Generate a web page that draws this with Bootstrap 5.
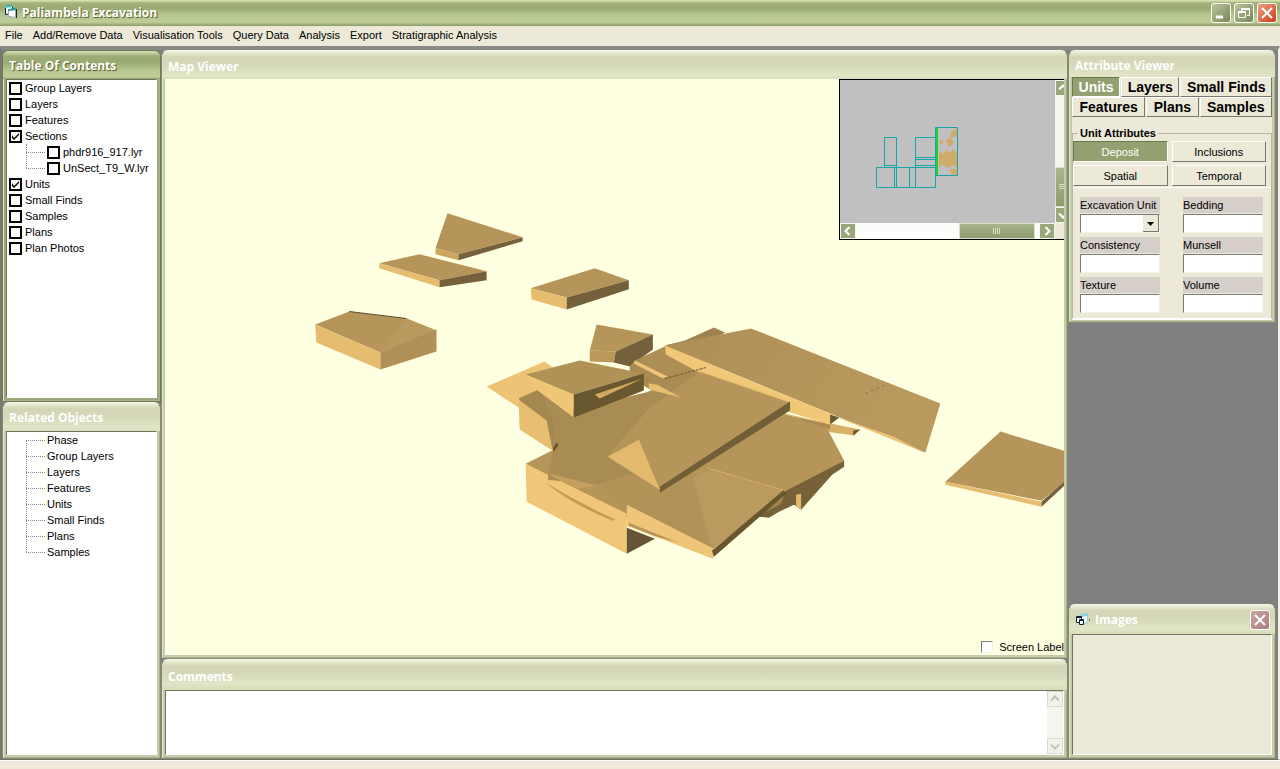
<!DOCTYPE html>
<html lang="en">
<head>
<meta charset="utf-8">
<meta name="viewport" content="width=device-width, initial-scale=1">
<title>Paliambela Excavation</title>
<link href="https://cdn.jsdelivr.net/npm/bootstrap@5.3.0/dist/css/bootstrap.min.css" rel="stylesheet">
<style>
  :root { --face:#ece9d8; --olive:#93a070; --line:#6f735f; }
  body { font-family:"Liberation Sans",sans-serif; font-size:11px; line-height:16px; color:#000; background:var(--face); min-height:100vh; }
  button, input, select, textarea { font:inherit; color:inherit; border-radius:0; padding:0; }
  .ui-title { font-family:"Open Sans",sans-serif; font-weight:700; font-size:12px; line-height:16px; color:#fff; }
  .app-title { height:26px; padding:0 3px 0 4px; background:linear-gradient(#dfe9b8 0,#a3b37c 3px,#98a971 8px,#b6c68f 15px,#c0cf9a 22px,#8b9b66 26px); text-shadow:1px 1px 1px #4b5a2c; }
  .sys { width:20px; height:20px; border:1px solid #fff; border-radius:3px; background:linear-gradient(135deg,#b9c79a,#74875a); }
  .sys svg, .arrow svg { display:block; margin:auto; }
  .sys-close { background:linear-gradient(135deg,#f0a184,#c93d1c); }
  .sys-soft { background:linear-gradient(135deg,#c9a5a2,#a97e80); }
  .sys-row { gap:3px; }
  .app-menu { height:20px; }
  .app-menu a { color:#000; text-decoration:none; }
  .menu-gap { gap:10px; padding:1px 5px; }
  .desk { background:#808080; border-top:4px solid #8b8b85; border-left:2px solid #77796c; border-right:2px solid #f4f2e8; border-bottom:1px solid var(--line); }
  .side-left { width:159px; }
  .side-right { width:210px; padding-right:2px; }
  .pane { background:#c5ccac; border:1px solid #84896f; border-top-color:#f6f7e6; border-radius:7px 7px 0 0; padding:0 3px 3px; box-shadow:inset 1px 0 #e3e8cd, inset -1px -1px #a9b28f; }
  .pane-head { height:28px; margin:0 -3px; padding:7px 5px 0 6px; border-radius:6px 6px 0 0; background:linear-gradient(#f0f2dc 0,#d3d5b6 6px,#d5d8b9 14px,#e1e5c6 24px,#d8ddbb 28px); }
  .pane-active { background:#9aa97b; border-color:#6c7953; }
  .pane-active .pane-head { background:linear-gradient(#dce5bf 0,#9dad77 5px,#9aaa73 11px,#b8c892 20px,#c0cf9b 26px,#8d9c69 28px); text-shadow:1px 1px 1px #4b5a2c; }
  .well { background:#fff; border:1px solid var(--line); border-right-color:#fff; border-bottom-color:#fff; }
  .toc-pane { height:352px; }
  .tree, .tree ul { list-style:none; margin:0; padding:0; }
  .toc { padding:0 2px; }
  .tick { appearance:none; width:13px; height:13px; flex:none; margin:2px 3px 0 0; border:2px solid #000; background:#fff center/9px 9px no-repeat; }
  .tick:checked { background-image:url("data:image/svg+xml,%3Csvg xmlns='http://www.w3.org/2000/svg' viewBox='0 0 9 9'%3E%3Cpath d='M1 3v3l2 2 5-5V1L3 6z'/%3E%3C/svg%3E"); }
  .branches { position:relative; }
  .branches li::before { content:""; width:19px; margin-right:2px; border-top:1px dotted #888; }
  .branches::before { content:""; position:absolute; top:0; bottom:8px; border-left:1px dotted #888; }
  .toc .branches { margin-left:17px; }
  .related { margin-left:19px; }
  .related::before { top:8px; }
  .map { background:#ffffe1; overflow:hidden; }
  .scene { display:block; width:100%; height:100%; min-height:300px; }
  .inset-map { width:225px; height:161px; border:1px solid #000; border-right:0; background:var(--face); overflow:hidden; }
  .inset-view { width:215px; background:#c0c0c0; }
  .bar-v { width:16px; background:#f5f4f0; }
  .bar-h { height:16px; background:#fcfcfa; }
  .arrow { width:16px; height:16px; flex:none; border:1px solid #f6f8ec; background:#9aa77c; }
  .arrow-off { background:#f2f1ea; border-color:#dcdacd; }
  .thumb { background:linear-gradient(#a9b58c,#8d9b6d); border:1px solid #d9e0c5; }
  .thumb-h { width:76px; }
  .grip { width:8px; height:6px; background:repeating-linear-gradient(90deg,#d8e0c0 0 1px,transparent 1px 2px); }
  .grip-v { background:repeating-linear-gradient(#d8e0c0 0 1px,transparent 1px 2px); }
  .screen-label { right:0; bottom:0; gap:6px; }
  .sunk { appearance:none; border:1px solid #7b7b72; border-right-color:#f4f2e6; border-bottom-color:#f4f2e6; background:#fff; }
  .label-tick { width:12px; height:12px; margin:0; }
  .map-pane .pane-head { padding-top:8px; }
  .comments-pane { height:100px; }
  .comments-pane .pane-head { height:30px; padding-top:9px; }
  .notes { resize:none; border:0; outline:0; }
  .attr-pane { padding-bottom:2px; }
  .attr-pane .pane-head { height:26px; }
  .attr { background:var(--face); border-bottom:1px solid #fff; }
  .tab { font-size:14px; font-weight:700; line-height:18px; height:20px; border:1px solid #fff; border-right-color:#77776b; border-bottom-color:#77776b; background:var(--face); white-space:nowrap; }
  .tab.chosen, .key.chosen { background:var(--olive); color:#fff; border-color:#6c7950 #fff #fff #6c7950; }
  .tab-row { gap:1px; overflow:hidden; }
  .group { border:1px solid #b9b8a6; border-bottom-color:#fff; margin:10px 0 0; padding:0; }
  .group legend { float:none; width:auto; margin:0 0 0 5px; padding:0 2px; font-size:11px; line-height:12px; font-weight:700; }
  .keys { gap:3px; margin-top:2px; padding-right:5px; }
  .keys > div { gap:4px; }
  .key { height:21px; border:1px solid #fff; border-right-color:#77776b; border-bottom-color:#77776b; background:var(--face); flex:1 1 0; line-height:18px; }
  .fields { display:grid; grid-template-columns:1fr 1fr; column-gap:23px; padding:9px 8px 1px 7px; border-top:1px solid #fff; margin-top:1px; }
  .fields label { display:block; background:#d6cfc9; }
  .fields .sunk { display:block; width:100%; height:19px; margin:1px 0 4px; }
  .combo { background:#fff right 0 center/16px 17px no-repeat url("data:image/svg+xml,%3Csvg xmlns='http://www.w3.org/2000/svg' viewBox='0 0 16 17'%3E%3Cpath fill='%23ece9d8' d='M0 0h16v17H0z'/%3E%3Cpath fill='none' stroke='%23777' d='M0 16.5h15.500V0'/%3E%3Cpath d='M4 7h7L7.500 11z'/%3E%3C/svg%3E"); }
  .images-pane { height:155px; }
  .images-pane .pane-head { height:29px; padding-top:0; }
  .images-pane .well { background:var(--face); }
  .status { height:9px; flex:none; background:#efe9dc; border-top:1px solid #fff; }
</style>
</head>
<body class="d-flex flex-column">
<header>
  <div class="app-title d-flex align-items-center">
    <svg width="14" height="16" viewBox="0 0 14 16" aria-hidden="true"><path fill="#fff" stroke="#123" d="M1.500 1.500l7-1v8l-7 1z"/><path fill="#4cc" d="M1 1l8-1v2L1 3z"/><path fill="#fff" stroke="#9ab" d="M4.500 5.500l7-1v8l-7-1z"/><path fill="#2a9a9a" d="M4 4l8-1v2L4 6z"/><path stroke="#123" d="M12.500 4v9"/></svg>
    <h1 class="ui-title m-0 flex-grow-1 px-1">Paliambela Excavation</h1>
    <div class="sys-row d-flex">
      <button class="sys" aria-label="Minimize"><svg width="16" height="16"><path stroke="#fff" stroke-width="3" d="M3 12h7"/></svg></button>
      <button class="sys" aria-label="Restore"><svg width="16" height="16" fill="none" stroke="#fff"><path d="M5.500 6V3.500h8v7H11M5 4.500h9"/><path d="M2.500 6.500h7v6h-7zM2 7.500h8"/></svg></button>
      <button class="sys sys-close" aria-label="Close"><svg width="16" height="16"><path stroke="#fff" stroke-width="2" d="M3 3l10 10M13 3L3 13"/></svg></button>
    </div>
  </div>
  <nav class="app-menu">
    <div class="menu-gap d-flex">
      <a href="#">File</a><a href="#">Add/Remove Data</a><a href="#">Visualisation Tools</a><a href="#">Query Data</a><a href="#">Analysis</a><a href="#">Export</a><a href="#">Stratigraphic Analysis</a>
    </div>
  </nav>
</header>

<main class="desk d-flex flex-grow-1">
  <div class="side-left d-flex flex-column flex-shrink-0">
    <section class="pane pane-active toc-pane d-flex flex-column">
      <h2 class="pane-head ui-title mb-0">Table Of Contents</h2>
      <div class="well flex-grow-1">
        <ul class="tree toc">
          <li><label class="d-flex"><input class="tick" type="checkbox">Group Layers</label></li>
          <li><label class="d-flex"><input class="tick" type="checkbox">Layers</label></li>
          <li><label class="d-flex"><input class="tick" type="checkbox">Features</label></li>
          <li><label class="d-flex"><input class="tick" type="checkbox" checked>Sections</label>
            <ul class="branches">
              <li class="d-flex align-items-center"><label class="d-flex"><input class="tick" type="checkbox">phdr916_917.lyr</label></li>
              <li class="d-flex align-items-center"><label class="d-flex"><input class="tick" type="checkbox">UnSect_T9_W.lyr</label></li>
            </ul></li>
          <li><label class="d-flex"><input class="tick" type="checkbox" checked>Units</label></li>
          <li><label class="d-flex"><input class="tick" type="checkbox">Small Finds</label></li>
          <li><label class="d-flex"><input class="tick" type="checkbox">Samples</label></li>
          <li><label class="d-flex"><input class="tick" type="checkbox">Plans</label></li>
          <li><label class="d-flex"><input class="tick" type="checkbox">Plan Photos</label></li>
        </ul>
      </div>
    </section>
    <section class="pane d-flex flex-column flex-grow-1">
      <h2 class="pane-head ui-title mb-0">Related Objects</h2>
      <div class="well flex-grow-1">
        <ul class="tree branches related">
          <li class="d-flex align-items-center">Phase</li><li class="d-flex align-items-center">Group Layers</li><li class="d-flex align-items-center">Layers</li><li class="d-flex align-items-center">Features</li><li class="d-flex align-items-center">Units</li><li class="d-flex align-items-center">Small Finds</li><li class="d-flex align-items-center">Plans</li><li class="d-flex align-items-center">Samples</li>
        </ul>
      </div>
    </section>
  </div>

  <div class="d-flex flex-column flex-grow-1">
    <section class="pane map-pane d-flex flex-column flex-grow-1">
      <h2 class="pane-head ui-title mb-0">Map Viewer</h2>
      <div class="map position-relative flex-grow-1">
        <svg class="scene" viewBox="166 80 899 575" preserveAspectRatio="xMinYMin slice" role="img" aria-label="Excavated units in three dimensions">
          <defs><linearGradient id="top" x2="1" y2=".3"><stop stop-color="#ae8f56"/><stop offset="1" stop-color="#b9995d"/></linearGradient></defs>
          <!-- outlying units -->
          <g fill="#b59559">
            <path d="M448 214l75 24-64 17-23-6z"/><path d="M380 264l40-9 67 17-47 9z"/><path d="M531 289l64-20 34 12-62 17z"/><path d="M316 325l34-13 57 7 30 12-56 22z"/><path d="M597 325l56 10-37 17-26-1z"/><path d="M1000 432l66 20v29l-25 20-96-19z"/>
          </g>
          <path d="M381 353l26-34 30 12z" fill="#b99a5e"/>
          <g fill="#e6bd70">
            <path d="M380 264l60 17v7l-60-19z"/><path d="M531 289l36 9v12l-35-10z"/><path d="M316 325l65 28v17l-64-27z"/><path d="M945 482l96 20v5l-96-22z"/>
          </g>
          <path d="M436 249l23 6v6l-23-6z" fill="#cba661"/><path d="M590 351l26 1-2 11-24-1z" fill="#ba985a"/>
          <path d="M381 353l56-23v22l-56 18z" fill="#b09056"/>
          <g fill="#74603a">
            <path d="M459 255l64-17v4l-64 19z"/><path d="M440 281l47-9v9l-47 7z"/><path d="M567 298l62-17v9l-62 20z"/><path d="M616 352l37-17v15l-23 17-16-4z"/><path d="M1041 502l25-22v4l-25 23z"/>
          </g>
          <path d="M350 312l57 7" stroke="#5d4e30"/>
          <!-- rear slabs -->
          <path d="M665 346l20-5 29-13 11 5-20 12z" fill="#9e8350"/>
          <path d="M635 361l32-15 70 31-57 8z" fill="#ad8e55"/>
          <path d="M630 367l5-6 35 17 22-4 10 14-38 10-34-20z" fill="#a98a53"/><path d="M635 361l33 16-5 2-29-15z" fill="#efc677"/>
          <path d="M775 412l55 12 30 6-6 6-36-5-36-6z" fill="#d8b069"/><path d="M780 415l50 10v5z" fill="#a88a52"/><path d="M860 430l-7 6v-5z" fill="#69562f"/>
          <path d="M665 346l25-5 61-12 189 75-15 49-95-39z" fill="url(#top)"/>
          <path d="M665 346l167 69-2 10-40-12-80-34-44-24z" fill="#f1c778"/><path d="M830 415l95 38-32-16z" fill="#edc475"/>
          <path d="M830 415l9 3-9 7z" fill="#6c5933"/><path d="M865 394l23-10" stroke="#8f764a" stroke-dasharray="3 3"/>
          <!-- left slabs -->
          <path d="M487 387l58-25 40 30-66 16z" fill="#edc475"/>
          <path d="M519 399l20-9 36 24-20 38z" fill="#a58850"/><path d="M519 400l28 21 6 30-33-21z" fill="#e8bf72"/>
          <path d="M526 464l30-15 106 43-35 27z" fill="#b59559"/>
          <!-- lower right slab -->
          <path d="M785 485l59-24v6l-12 8-31 35-7-5-15 7-10 6-10-1-46 40z" fill="#766139"/>
          <path d="M796 495l5-1v16l-5-3z" fill="#e1b96c"/><path d="M775 502l9-6-3 8-17 9z" fill="#a1834c"/>
          <path d="M640 490l145-75 42 14 17 32-58 30-75 60z" fill="#b59559"/>
          <path d="M590 470l70-20 45 35-75 32z" fill="#b39358"/>
          <path d="M526 464l101 50v40l-100-52z" fill="#f0c778"/>
          <path d="M546 483q35 21 70 37l-3 1q-42-17-67-38z" fill="#c49b58"/>
          <path d="M627 528l28 11-28 15z" fill="#655534"/>
          <path d="M627 505l33-14 50-23 74 23-72 59z" fill="#b19258"/><path d="M693 478l17-9 74 22-72 58z" fill="#ba9a5e"/>
          <path d="M627 505l89 45-3 9-86-33z" fill="#efc677"/><path d="M629 523l50 20-25-7-25-10z" fill="#b8935a"/><path d="M784 490l2 4-72 63-2-6z" fill="#69562f"/>
          <path d="M707 468l78 23" stroke="#ddb66d" stroke-dasharray="3 1"/>
          <!-- central slabs -->
          <path d="M553 452l2-26-15-36 34 20 72-17 54-21-62 100-40 13-50-5z" fill="#a98c54"/>
          <path d="M608 456l42-48 50-36 90 31-130 86z" fill="#b5955a"/><path d="M660 489l-52-33 73-48z" fill="#b5955a"/>
          <path d="M608 457l31-17 21 50z" fill="#e3ba6d"/><path d="M790 402v9l-130 82v-6z" fill="#725e37"/>
          <path d="M649 384l8 1 24 13-32-8z" fill="#e8bf71"/><path d="M665 379l41-11" stroke="#6a5833" stroke-dasharray="3 1"/><path d="M699 372l89 30" stroke="#ddb66d" stroke-dasharray="3 1"/>
          <path d="M551 474l46 12-20 3-26-13z" fill="#c49f5d"/><path d="M553 449l4-6 2 2-5 7z" fill="#67552f"/>
          <!-- upper left block -->
          <path d="M526 375l54-14 64 13-70 21z" fill="#b09156"/><path d="M526 375l48 20v23l-36-27z" fill="#efc677"/><path d="M574 395l70-21v17l-70 27z" fill="#69572f"/><path d="M595 395l48-16-43 20z" fill="#d2aa61"/>
        </svg>

        <div class="inset-map position-absolute top-0 end-0 d-flex">
          <div class="inset-view d-flex flex-column flex-shrink-0">
            <svg class="flex-grow-1" width="215" height="143" viewBox="840 80 215 143" role="img" aria-label="Trench plan">
              <path fill="#d0aa68" d="M939 151l5 3 2-4 4 3 3-4 4 4v14l-4-2-5 3-4-3-5 2zM951 132l6-4v8l-7 2zM945 140l6-2 3 5-5 4zM950 169h7v6h-5zM940 140h3v4h-3z"/>
              <path fill="none" stroke="#18a5a5" d="M884.500 137.500h12v30h-12zM876.500 167.500h59v20h-59zM894.500 167v20M896.500 167v20M909.500 167v20M915.500 137v50M915.500 137.500h21M915.500 157.500h21M915.500 159.500h21M915.500 165.500h21M935.500 127.500h22v48h-22zM884 165.500h12"/>
              <path stroke="#1fd02a" stroke-width="2" d="M937 128v47"/>
            </svg>
            <div class="bar-h d-flex">
              <button class="arrow" aria-label="Scroll left"><svg width="14" height="14"><path d="M8.500 3l-4 4 4 4" fill="none" stroke="#fff" stroke-width="2"/></svg></button>
              <div class="flex-grow-1 d-flex justify-content-end"><div class="thumb thumb-h h-100 d-flex align-items-center justify-content-center me-1"><span class="grip"></span></div></div>
              <button class="arrow" aria-label="Scroll right"><svg width="14" height="14"><path d="M5.500 3l4 4-4 4" fill="none" stroke="#fff" stroke-width="2"/></svg></button>
            </div>
          </div>
          <div class="d-flex flex-column flex-shrink-0">
            <div class="bar-v d-flex flex-column flex-grow-1">
              <button class="arrow" aria-label="Scroll up"><svg width="14" height="14"><path d="M3 8.500l4-4 4 4" fill="none" stroke="#fff" stroke-width="2"/></svg></button>
              <div class="flex-grow-1 d-flex align-items-end"><div class="thumb w-100 d-flex align-items-center justify-content-center py-3"><span class="grip grip-v"></span></div></div>
              <button class="arrow" aria-label="Scroll down"><svg width="14" height="14"><path d="M3 5.500l4 4 4-4" fill="none" stroke="#fff" stroke-width="2"/></svg></button>
            </div>
            <div class="arrow invisible"></div>
          </div>
        </div>
        <label class="screen-label position-absolute d-flex align-items-center"><input class="sunk label-tick" type="checkbox">Screen Label</label>
      </div>
    </section>
    <section class="pane comments-pane d-flex flex-column">
      <h2 class="pane-head ui-title mb-0"><label for="notes">Comments</label></h2>
      <div class="well flex-grow-1 d-flex">
        <textarea id="notes" class="notes flex-grow-1"></textarea>
        <div class="bar-v d-flex flex-column justify-content-between">
          <button class="arrow arrow-off" aria-label="Scroll up"><svg width="14" height="14"><path d="M3 8.500l4-4 4 4" fill="none" stroke="#c3c2b6" stroke-width="2"/></svg></button>
          <button class="arrow arrow-off" aria-label="Scroll down"><svg width="14" height="14"><path d="M3 5.500l4 4 4-4" fill="none" stroke="#c3c2b6" stroke-width="2"/></svg></button>
        </div>
      </div>
    </section>
  </div>

  <aside class="side-right d-flex flex-column justify-content-between flex-shrink-0">
    <section class="pane attr-pane">
      <h2 class="pane-head ui-title mb-0">Attribute Viewer</h2>
      <div class="attr">
        <div class="tab-row d-flex"><button class="tab chosen flex-grow-1">Units</button><button class="tab flex-grow-1">Layers</button><button class="tab flex-grow-1">Small Finds</button></div>
        <div class="tab-row d-flex"><button class="tab flex-grow-1">Features</button><button class="tab flex-grow-1">Plans</button><button class="tab flex-grow-1">Samples</button></div>
        <fieldset class="group">
          <legend>Unit Attributes</legend>
          <div class="keys d-flex flex-column">
            <div class="d-flex"><button class="key chosen">Deposit</button><button class="key">Inclusions</button></div>
            <div class="d-flex"><button class="key">Spatial</button><button class="key">Temporal</button></div>
          </div>
          <div class="fields">
            <div><label for="unit">Excavation Unit</label><select id="unit" class="sunk combo"><option></option></select></div>
            <div><label for="bedding">Bedding</label><input id="bedding" class="sunk"></div>
            <div><label for="consistency">Consistency</label><input id="consistency" class="sunk"></div>
            <div><label for="munsell">Munsell</label><input id="munsell" class="sunk"></div>
            <div><label for="texture">Texture</label><input id="texture" class="sunk"></div>
            <div><label for="volume">Volume</label><input id="volume" class="sunk"></div>
          </div>
        </fieldset>
      </div>
    </section>
    <section class="pane images-pane d-flex flex-column">
      <div class="pane-head d-flex align-items-center">
        <svg width="16" height="16" viewBox="0 0 16 16" aria-hidden="true"><path fill="#8ad4df" d="M5 2l8-1v9l-5 3z"/><path fill="#fff" d="M7 5l5-1v6l-5 1z"/><path fill="#fff" stroke="#123" d="M1.500 4.500h5v6h-5z"/><path fill="#fff" stroke="#123" d="M4.500 7.500h4v5h-4z"/><path stroke="#123" d="M1 5.500h5M5 8.500h3"/><path fill="#667" d="M14 7h1v2h-1z"/></svg>
        <h2 class="ui-title m-0 ms-1 flex-grow-1">Images</h2>
        <button class="sys sys-soft flex-shrink-0" aria-label="Close"><svg width="16" height="16"><path stroke="#fff" stroke-width="2" d="M3 3l10 10M13 3L3 13"/></svg></button>
      </div>
      <div class="well flex-grow-1"></div>
    </section>
  </aside>
</main>
<footer class="status"></footer>
<script src="https://cdn.jsdelivr.net/npm/bootstrap@5.3.0/dist/js/bootstrap.bundle.min.js"></script>
</body>
</html>
